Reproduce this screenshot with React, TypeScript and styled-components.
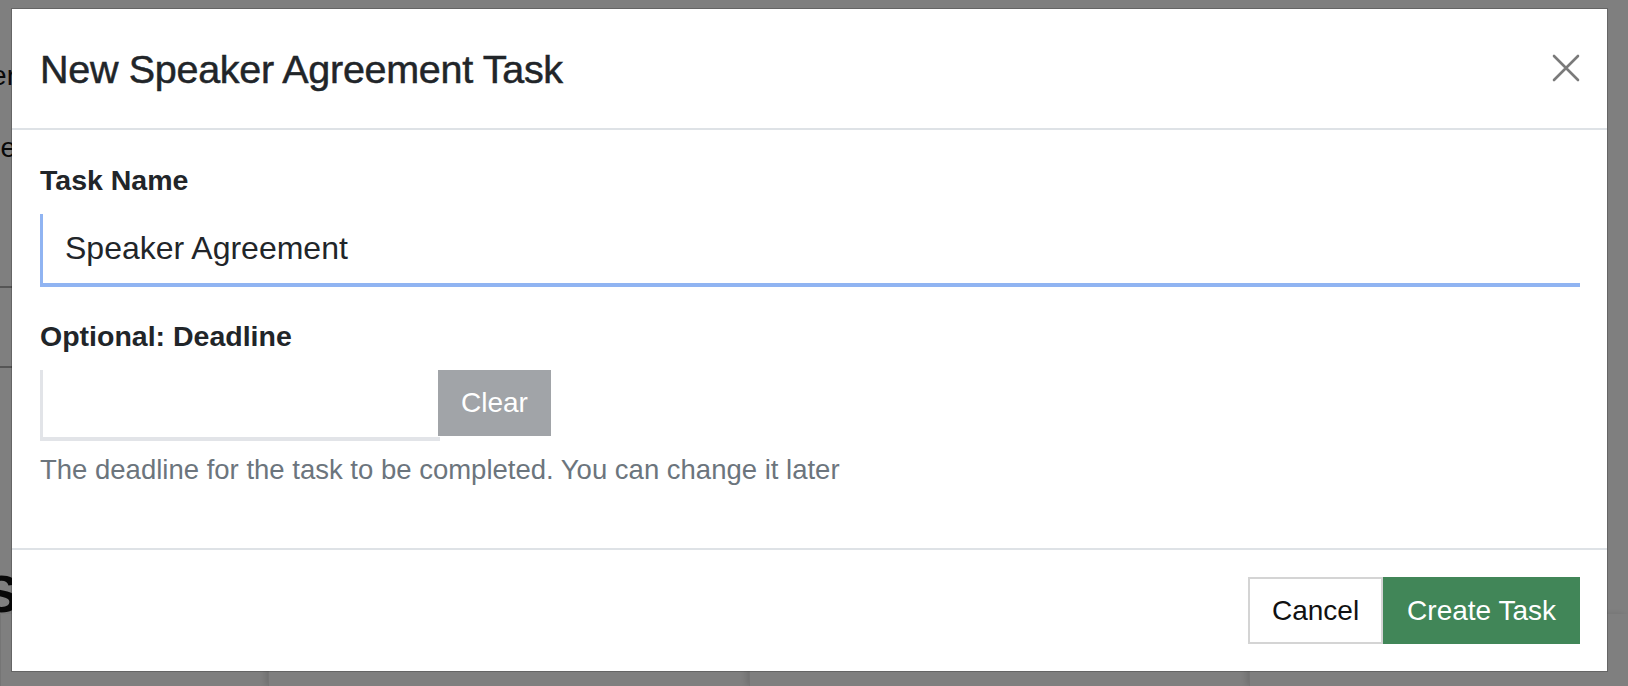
import React, { useState } from 'react';
import styled, { createGlobalStyle } from 'styled-components';

const GlobalStyle = createGlobalStyle`
  html, body {
    margin: 0;
    padding: 0;
    overflow: hidden;
    background: #ffffff;
  }
  * {
    box-sizing: border-box;
  }
`

const FONT = `"Liberation Sans", Arial, Helvetica, sans-serif`


function App() {
  const [taskName, setTaskName] = useState('Speaker Agreement')
  const [deadline, setDeadline] = useState('')

  return (
    <Page>
      <GlobalStyle />

      {/* page content sitting under the modal backdrop */}
      <Behind>
        <SideColumn>
          <SideHeading>Speaker</SideHeading>
          <SideText>Name</SideText>
          <Rule $top={122} />
          <Rule $top={78} />
        </SideColumn>
        <SectionTitle>Sessions</SectionTitle>
        <CardRow>
          <Card />
          <Card />
          <Card />
          <Card />
        </CardRow>
      </Behind>

      <Backdrop />

      <Dialog role="dialog" aria-modal="true">
        <Header>
          <Title>New Speaker Agreement Task</Title>
          <CloseButton aria-label="Close">
            <svg width="28" height="28" viewBox="0 0 28 28">
              <path d="M2 2 L26 26 M26 2 L2 26" stroke="#7a7a7a" strokeWidth="2.6" strokeLinecap="round" />
            </svg>
          </CloseButton>
        </Header>

        <Body>
          <Label htmlFor="task-name">Task Name</Label>
          <TextInput
            id="task-name"
            value={taskName}
            onChange={e => setTaskName(e.target.value)}
            $focused
          />

          <Label htmlFor="deadline" $spaced>Optional: Deadline</Label>
          <DateRow>
            <TextInput
              id="deadline"
              value={deadline}
              onChange={e => setDeadline(e.target.value)}
              $width={400}
              $height={71}
            />
            <ClearButton onClick={() => setDeadline('')}>Clear</ClearButton>
          </DateRow>
          <Help>The deadline for the task to be completed. You can change it later</Help>
        </Body>

        <Footer>
          <Button>Cancel</Button>
          <Button $primary>Create Task</Button>
        </Footer>
      </Dialog>
    </Page>
  )
}


const Page = styled.div`
  position: relative;
  width: 1628px;
  height: 686px;
  overflow: hidden;
  font-family: ${FONT};
  color: #212529;
`

const Behind = styled.div`
  display: flex;
  flex-direction: column;
  height: 100%;
`

const SideColumn = styled.div`
  display: flex;
  flex-direction: column;
  width: 120px;
  margin-left: -104px;
  padding-top: 60px;
  text-align: right;
`

const SideHeading = styled.div`
  font-size: 28px;
  line-height: 32px;
  color: #111;
`

const SideText = styled.div`
  margin-top: 40px;
  font-size: 28px;
  line-height: 32px;
  color: #111;
`

const Rule = styled.hr<{ $top: number }>`
  width: 100%;
  margin: ${p => p.$top}px 0 0;
  border: 0;
  border-top: 2px solid #aaa;
`

const SectionTitle = styled.h2`
  margin: 198px 0 0 -16px;
  font-size: 52px;
  line-height: 56px;
  font-weight: 700;
  color: #111;
`

const CardRow = styled.div`
  display: grid;
  grid-template-columns: 268px 481px 500px 1fr;
  margin-top: -8px;
  flex: 1;
`

const Card = styled.div`
  background: #fff;
  border-left: 1px solid rgba(0, 0, 0, 0.08);
  box-shadow: -3px 0 6px rgba(0, 0, 0, 0.12);
`

const Backdrop = styled.div`
  position: absolute;
  inset: 0;
  background: rgba(0, 0, 0, 0.5);
`

const Dialog = styled.div`
  position: absolute;
  left: 11px;
  top: 8px;
  width: 1597px;
  height: 664px;
  display: flex;
  flex-direction: column;
  background: #ffffff;
  border: 1px solid rgba(0, 0, 0, 0.2);
  background-clip: padding-box;
`

const Header = styled.div`
  display: flex;
  align-items: center;
  justify-content: space-between;
  height: 121px;
  padding: 0 27px 0 28px;
  border-bottom: 2px solid #dee2e6;
`

const Title = styled.h5`
  margin: 0;
  font-size: 39.5px;
  font-weight: 500;
  line-height: 44px;
  letter-spacing: -0.3px;
  -webkit-text-stroke: 0.5px #212529;
  color: #212529;
`

const CloseButton = styled.button`
  display: flex;
  padding: 0;
  margin-top: -2px;
  border: 0;
  background: transparent;
  cursor: pointer;
`

const Body = styled.div`
  display: flex;
  flex-direction: column;
  align-items: flex-start;
  flex: 1;
  padding: 33px 27px 0 28px;
`

const Label = styled.label<{ $spaced?: boolean }>`
  margin-top: ${p => (p.$spaced ? 32 : 0)}px;
  margin-bottom: 17px;
  font-size: 28.5px;
  line-height: 34px;
  font-weight: 700;
  color: #212529;
`

const TextInput = styled.input<{ $focused?: boolean; $width?: number; $height?: number }>`
  width: ${p => (p.$width ? `${p.$width}px` : '100%')};
  height: ${p => p.$height || 73}px;
  padding: 0 22px;
  font-family: ${FONT};
  font-size: 32px;
  color: #212529;
  background: #ffffff;
  border: 0;
  border-left: 3px solid ${p => (p.$focused ? '#90b4f2' : '#e2e4e8')};
  border-bottom: 4px solid ${p => (p.$focused ? '#90b4f2' : '#e2e4e8')};
  outline: none;
`

const DateRow = styled.div`
  display: flex;
  align-items: flex-start;
`

const ClearButton = styled.button`
  height: 66px;
  margin-left: -2px;
  padding: 0 23px;
  font-family: ${FONT};
  font-size: 28px;
  color: #ffffff;
  background: #a1a4a8;
  border: 0;
  cursor: pointer;
`

const Help = styled.div`
  margin-top: 13px;
  font-size: 27.5px;
  line-height: 32px;
  color: #6c757d;
`

const Footer = styled.div`
  display: flex;
  justify-content: flex-end;
  align-items: center;
  height: 123px;
  padding: 0 27px;
  border-top: 2px solid #dee2e6;
`

const Button = styled.button<{ $primary?: boolean }>`
  height: 67px;
  padding: 0 22px;
  font-family: ${FONT};
  font-size: 28px;
  color: ${p => (p.$primary ? '#ffffff' : '#111111')};
  background: ${p => (p.$primary ? '#418658' : '#ffffff')};
  border: 2px solid ${p => (p.$primary ? '#418658' : '#d4d4d4')};
  cursor: pointer;
`


export default App
